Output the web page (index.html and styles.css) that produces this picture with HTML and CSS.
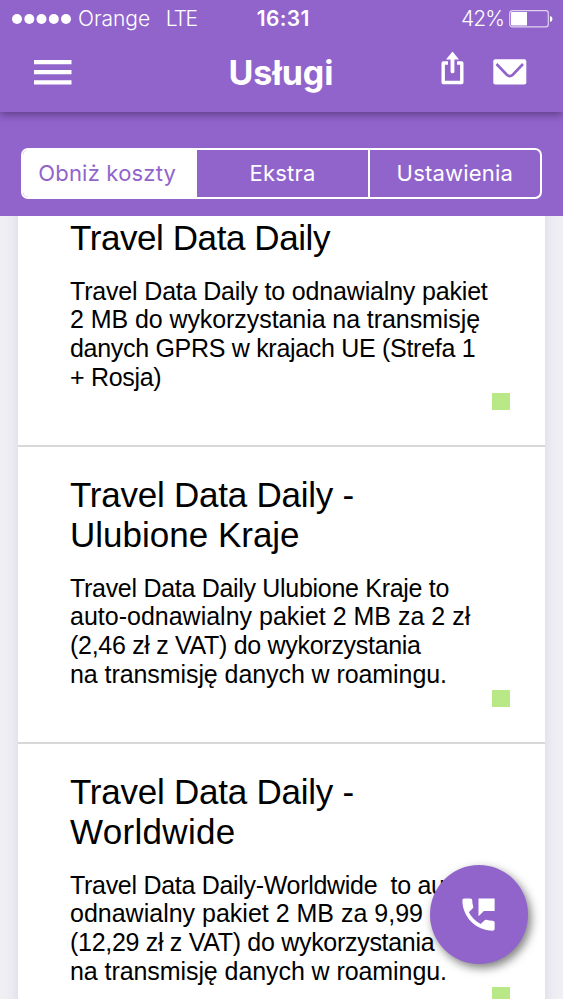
FILE: index.html
```html
<!DOCTYPE html>
<html lang="pl">
<head>
<meta charset="utf-8">
<title>Usługi</title>
<link rel="stylesheet" href="styles.css">
</head>
<body>
<header class="top">
  <div class="status">
    <div class="carrier">
      <svg class="dots" width="60" height="10" viewBox="0 0 60 10"><circle cx="5" cy="5" r="5"/><circle cx="17.3" cy="5" r="5"/><circle cx="29.5" cy="5" r="5"/><circle cx="41.8" cy="5" r="5"/><circle cx="54" cy="5" r="5"/></svg>
      <span class="operator">Orange</span><span class="network">LTE</span>
    </div>
    <span class="clock">16:31</span>
    <div class="power">
      <span class="percent">42%</span>
      <svg width="44" height="18" viewBox="0 0 44 18"><rect x=".7" y=".7" width="38.6" height="16.2" rx="2.6" fill="none" stroke="#e0d2f0" stroke-width="1.2"/><path fill="#fff" d="M2 3q0-1 1-1h15v13.400H3q-1 0-1-1zM41 6q2.500.5 2.500 3T41 12z"/></svg>
    </div>
  </div>
  <div class="nav">
    <svg class="menu" width="38" height="25" viewBox="0 0 38 25"><path d="M0 0h37.500v4.200H0zM0 10h37.500v4.200H0zM0 20.200h37.500v4.200H0z"/></svg>
    <h1>Usługi</h1>
    <div class="actions">
      <svg width="24" height="34" viewBox="0 0 24 34"><path fill="none" stroke="#fff" stroke-width="3.400" stroke-linejoin="round" d="M7 12H2.200v19.500h18.600V12H16"/><path d="M9.600 21V8.500H5L11.500.6 18 8.500h-4.600V21q0 1.300-1.900 1.300T9.600 21z"/></svg>
      <svg width="34" height="26" viewBox="0 0 34 26"><rect x=".3" y=".2" width="33" height="25.300" rx="2"/><path fill="none" stroke="#9164cc" stroke-width="2.600" d="M3.500 5l10.300 10.700q3 2.700 6 0L30 5"/></svg>
    </div>
  </div>
</header>
<nav class="filters">
  <div class="segments">
    <span class="segment active">Obniż koszty</span>
    <span class="segment">Ekstra</span>
    <span class="segment">Ustawienia</span>
  </div>
</nav>
<main class="viewport">
  <div class="list">
    <article class="card">
      <h2><span class="tight">Travel Data Daily</span></h2>
      <p><span class="snug">Travel Data Daily to odnawialny pakiet</span><br><span class="close">2 MB do wykorzystania na transmisję</span><br><span class="tight">danych GPRS w krajach UE (Strefa 1</span><br><span class="tight">+ Rosja)</span></p>
      <i class="mark"></i>
    </article>
    <article class="card">
      <h2><span class="snug">Travel Data Daily -</span><br>Ulubione Kraje</h2>
      <p><span class="tight">Travel Data Daily Ulubione Kraje to</span><br>auto-odnawialny pakiet 2 MB za 2 zł<br><span class="tight">(2,46 zł z VAT) do wykorzystania</span><br><span class="close">na transmisję danych w roamingu.</span></p>
      <i class="mark"></i>
    </article>
    <article class="card">
      <h2><span class="snug">Travel Data Daily -</span><br><span class="loose">Worldwide</span></h2>
      <p><span class="tight">Travel Data Daily-Worldwide&nbsp; to auto-</span><br>odnawialny pakiet 2 MB za 9,99 zł<br><span class="tight">(12,29 zł z VAT) do wykorzystania</span><br><span class="close">na transmisję danych w roamingu.</span></p>
      <i class="mark"></i>
    </article>
  </div>
</main>
<div class="fab">
  <svg width="43" height="43" viewBox="0 0 24 24"><path d="M20 15.500c-1.250 0-2.450-.2-3.570-.57-.35-.11-.74-.03-1.020.24l-2.200 2.200c-2.830-1.440-5.150-3.750-6.590-6.580l2.200-2.210c.28-.27.36-.66.25-1.010C8.700 6.450 8.500 5.250 8.500 4c0-.55-.45-1-1-1H4c-.55 0-1 .45-1 1 0 9.390 7.610 17 17 17 .55 0 1-.45 1-1v-3.500c0-.55-.45-1-1-1zM12 3v10l3-3h6V3h-9z"/></svg>
</div>
</body>
</html>
```
FILE: styles.css
```css
* { box-sizing: border-box; }
body {
  margin: 0;
  height: 999px;
  overflow: hidden;
  display: flex;
  flex-direction: column;
  background: #efeff4;
  color: #000;
  font-family: "Liberation Sans", sans-serif;
}
svg { display: block; fill: #fff; flex: none; }
span { white-space: nowrap; }
.top {
  flex: none;
  height: 112px;
  background: #9164cc;
  color: #fff;
  font-family: Inter, sans-serif;
  box-shadow: 0 2px 9px rgba(40, 20, 60, .55);
  z-index: 1;
}
.status {
  height: 37px;
  display: grid;
  grid-template-columns: 1fr auto 1fr;
  align-items: center;
  padding: 0 10px 0 11.500px;
  font-size: 21px;
  line-height: 37px;
}
.carrier, .power { display: flex; align-items: center; font-weight: 350; }
.operator { margin-left: 6.500px; letter-spacing: 0; }
.network { margin-left: 15.500px; letter-spacing: -1.700px; }
.clock { font-weight: 600; padding-left: 2px; letter-spacing: .4px; }
.power { justify-content: flex-end; gap: 6px; }
.percent { position: relative; left: 1px; letter-spacing: -.9px; }
.nav {
  height: 75px;
  display: grid;
  grid-template-columns: 1fr auto 1fr;
  align-items: center;
  padding: 0 36px 4px 34px;
}
h1 { margin: 0; padding-left: 1px; font-size: 34px; line-height: 40px; font-weight: 700; }
.actions { display: flex; justify-content: flex-end; align-items: flex-end; gap: 28px; padding-bottom: 9px; }
.filters {
  flex: none;
  height: 104px;
  padding: 36px 21px 18px;
  background: #9164cc;
  color: #fff;
  font-family: Inter, sans-serif;
}
.segments {
  height: 51px;
  display: grid;
  grid-template-columns: repeat(3, 1fr);
  border: 2px solid #fff;
  border-radius: 7px;
  overflow: hidden;
}
.segment {
  font-size: 22px;
  font-weight: 400;
  line-height: 47px;
  text-align: center;
  letter-spacing: .2px;
}
.segment + .segment { border-left: 2px solid #fff; }
.active { background: #fff; color: #9164cc; padding-right: 4px; }
.viewport { flex: 1; min-height: 0; overflow: hidden; padding: 0 18px 0 17.500px; }
.list { margin-top: -25.500px; background: #fff; box-shadow: 0 0 14px rgba(80, 70, 120, .13); }
.card { padding: 27.500px 35.500px 35px 52.500px; border-bottom: 2px solid #d8d8d9; }
h2 { margin: 0; font-size: 35px; line-height: 40.400px; font-weight: 400; white-space: nowrap; }
p { margin: 18.200px 0 1px; font-size: 25px; line-height: 28.750px; white-space: nowrap; }
.tight { letter-spacing: -.012em; }
.snug { letter-spacing: -.007em; }
.close { letter-spacing: -.003em; }
.loose { letter-spacing: .009em; }
.mark { display: block; width: 17.500px; height: 17.500px; margin-left: auto; background: #b8e986; }
.fab {
  position: absolute;
  left: 429.500px;
  top: 865px;
  width: 98px;
  height: 98.500px;
  display: grid;
  place-items: center;
  border-radius: 50%;
  background: #9164cc;
  box-shadow: 3px 4px 10px rgba(0, 0, 0, .5);
}
```
